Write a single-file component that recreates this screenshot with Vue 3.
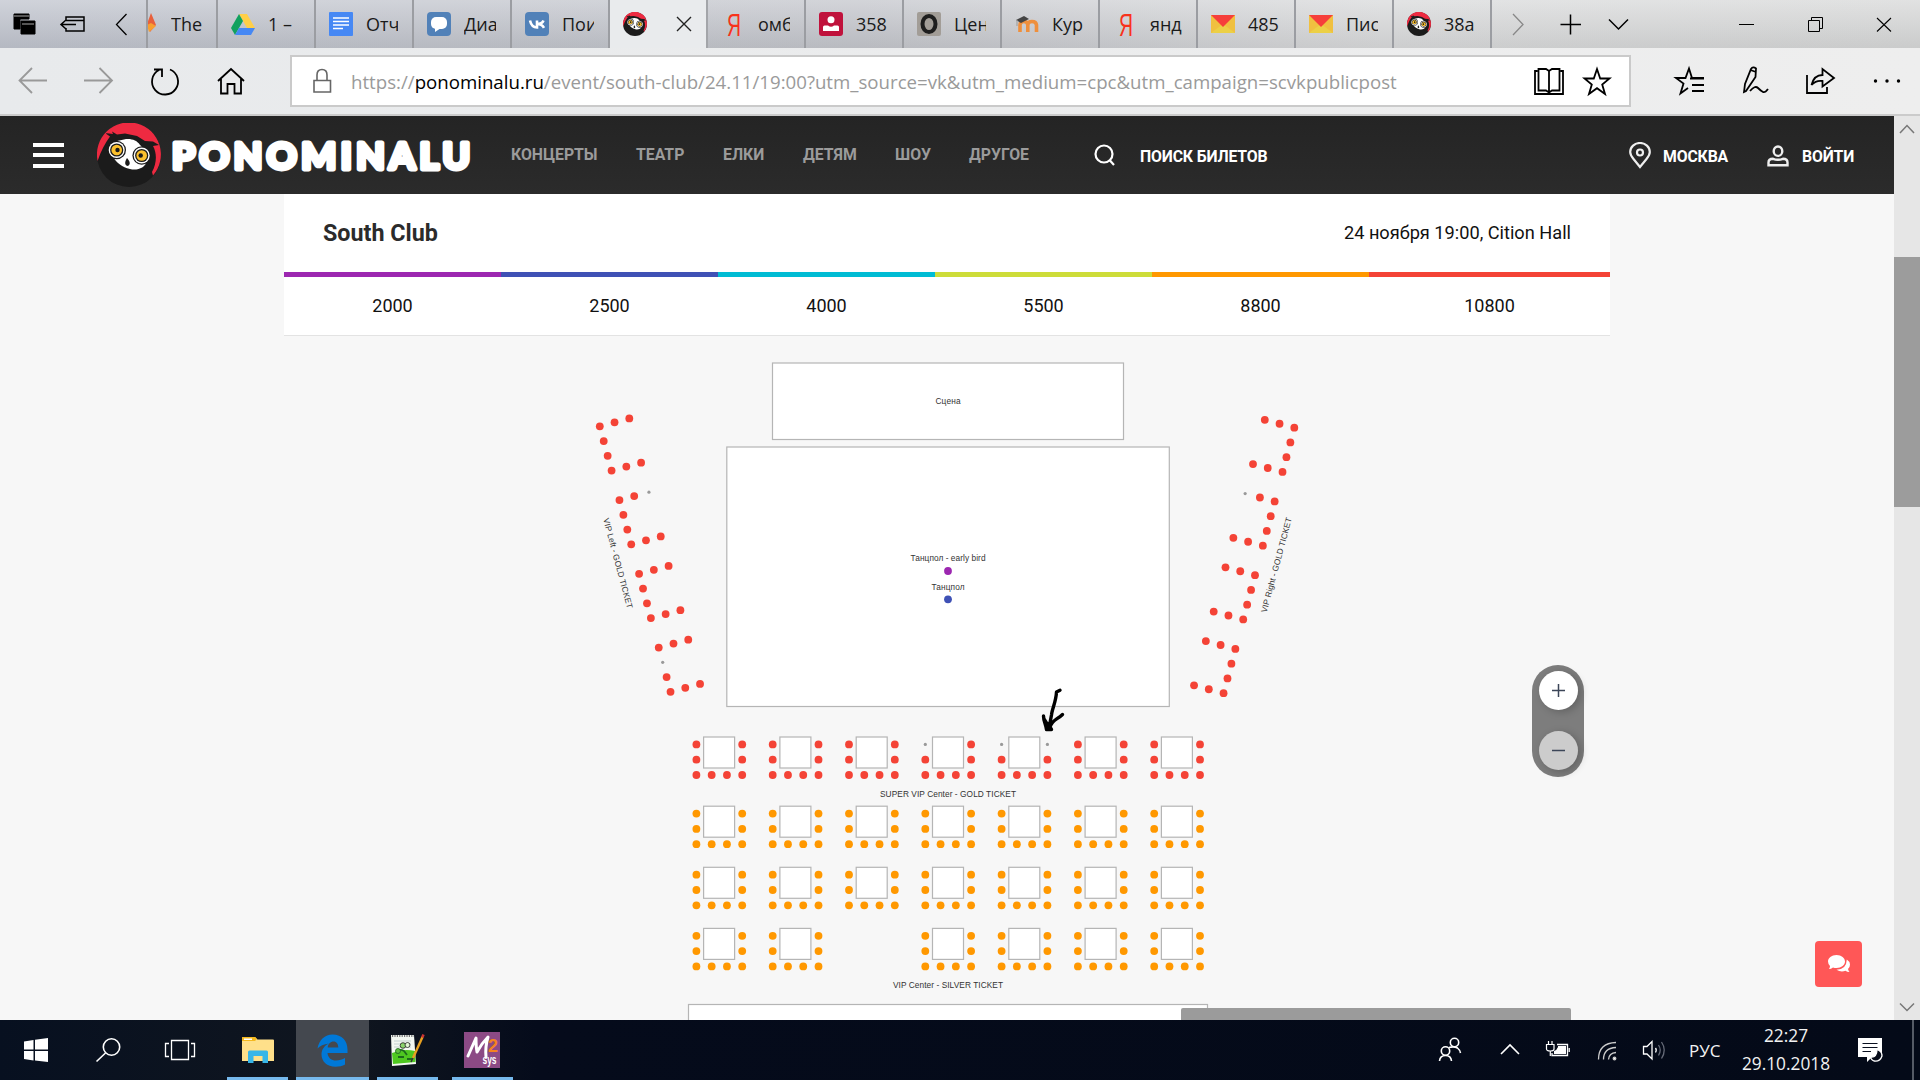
<script setup>
const tabs = [
  { icon: 'flame', text: 'The', narrow: true },
  { icon: 'drive', text: '1 –' },
  { icon: 'docs', text: 'Отч' },
  { icon: 'chat', text: 'Диа' },
  { icon: 'vk', text: 'Пои' },
  { icon: 'owl', text: '', active: true },
  { icon: 'ya', text: 'омб' },
  { icon: 'person', text: '358' },
  { icon: 'o', text: 'Цен' },
  { icon: 'moodle', text: 'Кур' },
  { icon: 'ya', text: 'янд' },
  { icon: 'mail', text: '485' },
  { icon: 'mail', text: 'Пис' },
  { icon: 'owl', text: '38a' },
]
const nav = [
  { t: 'КОНЦЕРТЫ', w: 125 },
  { t: 'ТЕАТР', w: 87 },
  { t: 'ЕЛКИ', w: 80 },
  { t: 'ДЕТЯМ', w: 92 },
  { t: 'ШОУ', w: 74 },
  { t: 'ДРУГОЕ', w: 125 },
]
const prices = [
  { p: 2000, c: 'purple' },
  { p: 2500, c: 'indigo' },
  { p: 4000, c: 'cyan' },
  { p: 5500, c: 'lime' },
  { p: 8800, c: 'orange' },
  { p: 10800, c: 'red' },
]

// Side VIP blocks: four tables in a slanted row, dir mirrors the block
function sideSeats(x0, y0, dir, sold) {
  const out = []
  const cells = [[0, 0], [1, 0], [2, 0], [0, 1], [0, 2], [0, 3], [1, 3], [2, 3]]
  for (let g = 0; g < 4; g++) {
    for (const [a, b] of cells) {
      const v = b + g * 5
      out.push({
        x: x0 + dir * (a * 14.75 + v * 3.93),
        y: y0 - dir * dir * a * 3.93 + v * 14.75,
        cls: sold.includes(`${g}-${a}-${b}`) ? 'sold' : 'gold',
      })
    }
  }
  return out
}

const tables = []
const seats = [
  ...sideSeats(599.8, 426.3, 1, ['1-2-0', '3-0-1']),
  ...sideSeats(1294.3, 427.7, -1, ['1-2-0']),
]
const rowY = [744.4, 813.6, 874.7, 935.8]
const centerSold = ['0-3-0', '0-4-0', '0-4-3']
rowY.forEach((y, r) => {
  for (let c = 0; c < 7; c++) {
    if (r === 3 && c === 2) continue
    const x = 696.4 + c * 76.3
    tables.push({ x: x + 7.2, y: y - 7.4 })
    for (const [a, b] of [[0, 0], [0, 1], [0, 2], [1, 2], [2, 2], [3, 2], [3, 1], [3, 0]]) {
      const sold = b === 0 && centerSold.includes(`${r}-${c}-${a}`)
      seats.push({
        x: x + a * 15.27,
        y: y + b * 15.3,
        cls: sold ? 'sold' : r === 0 ? 'gold' : 'silver',
      })
    }
  }
})
</script>

<template>
  <div class="screen">
    <svg class="defs" width="0" height="0">
      <symbol id="owl" viewBox="0 0 64 64">
        <circle cx="32" cy="32" r="32" fill="#1b1b1b" />
        <path d="M0.6 38A32 32 0 1 1 56 52.5L55 49C60 40 60 30 56 23L62 22 56 18.500 48 18 40 13 28 10.500 20 11.500 15 8.500 16 11 8 10 13 13.500C8 20 4 28 0.600 38Z" fill="#ee2a41" />
        <path d="M27 16.500C33 15 40 17 43 22L50 28 50 38C48 45 40 48 33 46 25 44 20 40 16 34L14 25 20 18Z" fill="#fff" />
        <circle cx="19.700" cy="27" r="9.300" fill="#1b1b1b" />
        <circle cx="44.700" cy="32.500" r="9.300" fill="#1b1b1b" />
        <circle cx="19.700" cy="27" r="8" fill="#fff" />
        <circle cx="44.700" cy="32.500" r="8" fill="#fff" />
        <circle cx="19.700" cy="27" r="6.600" fill="#1b1b1b" />
        <circle cx="44.700" cy="32.500" r="6.600" fill="#1b1b1b" />
        <circle cx="19.700" cy="27" r="5.300" fill="#fbc02d" />
        <circle cx="44.700" cy="32.500" r="5.300" fill="#fbc02d" />
        <circle cx="20.500" cy="27" r="2.200" fill="#1b1b1b" />
        <circle cx="43.700" cy="32.500" r="2.200" fill="#1b1b1b" />
        <path d="M30 35C33 38 34 42 30.500 43 27 42 28 38 30 35Z" fill="#1b1b1b" />
      </symbol>
    </svg>

    <div class="tabbar">
      <div class="tabtools">
        <svg width="147" height="48" fill="none" stroke="#000">
          <path d="M14 14H29V19H20V29H14Z" fill="#000" />
          <path d="M21 21H35V34H21Z" fill="#000" />
          <path d="M14 16H29M22 24H34" stroke="#aaa" />
          <path d="M66 21V17H84V31H66V28M66 20.500H84M61 24.500H76M66 20L61 24.500 66 29" stroke-width="1.500" />
          <path d="M126.500 14L116.500 24.500 126.500 35" stroke-width="1.300" />
        </svg>
      </div>
      <div v-for="(t, i) in tabs" :key="i" class="tab" :class="{ narrow: t.narrow, active: t.active }">
        <svg class="ticon" width="24" height="24" viewBox="0 0 24 24">
          <template v-if="t.icon === 'flame'">
            <path d="M13 12L17 1 22 13 16 20Z" fill="#e8603c" />
            <path d="M13 13L17 11 22 14 15 20Z" fill="#f9a030" />
          </template>
          <template v-else-if="t.icon === 'drive'">
            <path d="M8 2H16L24 16H16Z" fill="#ffcf48" />
            <path d="M8 2L12 9 4 23 0 16Z" fill="#11a15f" />
            <path d="M8 16H24L20 23H4Z" fill="#4688f4" />
          </template>
          <template v-else-if="t.icon === 'docs'">
            <rect width="24" height="24" rx="1" fill="#4688f4" />
            <path d="M4 6H20M4 9.500H20M4 13H20M4 16.500H14" stroke="#fff" stroke-width="1.700" />
          </template>
          <template v-else-if="t.icon === 'chat'">
            <rect width="24" height="24" rx="4" fill="#5181b8" />
            <rect x="4" y="5" width="16" height="12" rx="5" fill="#fff" />
            <path d="M8 15V20L14 16Z" fill="#fff" />
          </template>
          <template v-else-if="t.icon === 'vk'">
            <rect width="24" height="24" rx="4" fill="#5181b8" />
            <path d="M5 8.500C6 13 8 15.500 12 15.500V8.500M18.500 8.500C17.500 11 15 12 12 12 15 12 17.500 13 19 15.800" fill="none" stroke="#fff" stroke-width="2.600" />
          </template>
          <use v-else-if="t.icon === 'owl'" href="#owl" />
          <text v-else-if="t.icon === 'ya'" x="6" y="23.500" class="ya" textLength="14" lengthAdjust="spacingAndGlyphs">Я</text>
          <template v-else-if="t.icon === 'person'">
            <rect width="24" height="24" rx="3" fill="#c0123c" />
            <circle cx="12" cy="7.800" r="3.500" fill="#fff" />
            <path d="M4 19V15Q4 13.500 5.500 13.500H9Q12 16 15 13.500H18.500Q20 13.500 20 15V19Z" fill="#fff" />
          </template>
          <template v-else-if="t.icon === 'o'">
            <rect width="24" height="24" rx="2" fill="#a29d97" />
            <ellipse cx="12" cy="12" rx="6.500" ry="8" fill="none" stroke="#1e1e1e" stroke-width="4" />
          </template>
          <template v-else-if="t.icon === 'moodle'">
            <path d="M5 20V13Q5 9.500 8.800 9.500T12.800 13V20M12.800 13Q12.800 9.500 17 9.500T21.500 13V20" fill="none" stroke="#ef8f3c" stroke-width="3.600" />
            <path d="M1 8L9 4 14 7 6 11Z" fill="#444" />
            <path d="M2 8V14" stroke="#999" />
          </template>
          <template v-else-if="t.icon === 'mail'">
            <rect y="3" width="24" height="18" fill="#f0c040" />
            <path d="M0 21L12 12 24 21Z" fill="#ecd046" />
            <path d="M0 3H24L12 15Z" fill="#f63f3b" />
          </template>
        </svg>
        <svg v-if="t.active" class="tclose" width="16" height="16" stroke="#222" stroke-width="1.400"><path d="M1 1L15 15M15 1L1 15" /></svg>
        <span v-else class="ttext">{{ t.text }}</span>
      </div>
      <svg class="wintools" width="427" height="48" fill="none" stroke="#000" stroke-width="1.300">
        <path d="M21 14L31 24.500 21 35" stroke="#888" />
        <path d="M68.500 24.500H89M78.500 14.500V34.500" stroke-width="1.500" />
        <path d="M117 19.500L126.500 29 136 19.500" stroke-width="1.500" />
        <path d="M247 24.500H262" stroke-width="1" />
        <path d="M316.500 20.500H327.500V31.500H316.500ZM319.500 20V17.500H330.500V28.500H328" stroke-width="1" />
        <path d="M385 18L399 31.500M399 18L385 31.500" stroke-width="1.100" />
      </svg>
    </div>

    <div class="addressbar">
      <svg class="navicons" width="290" height="66" fill="none" stroke="#000" stroke-width="1.800">
        <g stroke="#999">
          <path d="M47 32.500H20M32 20L19.500 32.500 32 45" />
          <path d="M84 32.500H112M99.500 20L112 32.500 99.500 45" />
        </g>
        <path d="M170 21.500A13 13 0 1 1 159 22M154 21.500H162V29" />
        <path d="M218 33L231 21 244 33M221 31V45.500H227.500V36H234.500V45.500H241V31" />
      </svg>
      <div class="urlbox">
        <svg width="59" height="48" fill="none" stroke="#666" stroke-width="1.600">
          <path d="M22 23.500H38.500V35H22ZM25 23V18Q25 12.500 30 12.500T35 18V23" />
        </svg>
        <div class="url">https://<b>ponominalu.ru</b>/event/south-club/24.11/19:00?utm_source=vk&amp;utm_medium=cpc&amp;utm_campaign=scvkpublicpost</div>
        <svg width="107" height="48" fill="none" stroke="#000" stroke-width="1.800">
          <path d="M18.500 14H16V37H44V14H41.500M19.500 12H27L30 14 33 12H40.500V33.500H33L30 35.500 27 33.500H19.500ZM30 14V36" />
          <path d="M78 12L81.200 21.500H90.500L83.200 27.500 86 37 78 31.200 70 37 72.800 27.500 65.500 21.500H74.800Z" />
        </svg>
      </div>
      <svg class="acticons" width="289" height="66" fill="none" stroke="#000" stroke-width="1.800">
        <path d="M73 30H61L58 20.500 54.500 30H45L52.500 35.500 49.500 45.500 57 40M59 30.500H73M61 37H73M61 43H73" />
        <path d="M113 44L114 36 120 21Q122 18 125 20.500L124.500 29 115 43ZM119.500 22L125 24M119 43Q124 37 127 40T132 44 137 41" />
        <path d="M176 27V45H196V39M180.500 37Q183 27 191.500 27V21L203 30 191.500 38.500V33Q185 32 180.500 37Z" />
        <g fill="#000" stroke="none"><circle cx="244.500" cy="33" r="1.700" /><circle cx="256" cy="33" r="1.700" /><circle cx="267.500" cy="33" r="1.700" /></g>
      </svg>
    </div>

    <div class="viewport">
      <div class="page">
        <header class="site">
          <div class="burger"><i></i><i></i><i></i></div>
          <svg class="owl" width="64" height="64"><use href="#owl" /></svg>
          <svg class="brand" width="320" height="50"><text x="11" y="38.500" textLength="298">PONOMINALU</text></svg>
          <nav>
            <a v-for="n in nav" :key="n.t" :style="{ width: n.w + 'px' }">{{ n.t }}</a>
          </nav>
          <svg class="sicon" width="22" height="22" fill="none" stroke="#fff" stroke-width="2.200"><circle cx="10" cy="10" r="8.500" /><path d="M15.500 16L20 21" /></svg>
          <span class="find">ПОИСК БИЛЕТОВ</span>
          <svg class="pin" width="22" height="27" fill="none" stroke="#eee" stroke-width="2.200"><path d="M11 25L4.500 17Q1.200 13 1.200 10A9.800 9 0 0 1 20.800 10Q20.800 13 17.500 17Z" /><circle cx="11" cy="10.500" r="3" /></svg>
          <span class="city">МОСКВА</span>
          <svg class="user" width="22" height="22" fill="none" stroke="#eee" stroke-width="2.400"><ellipse cx="11" cy="6.200" rx="4.300" ry="4.700" /><path d="M1.500 20.300V17.500Q1.500 13.800 6 13.800 11 15.800 16 13.800 20.500 13.800 20.500 17.500V20.300Z" /></svg>
          <span class="login">ВОЙТИ</span>
        </header>

        <section class="event">
          <div class="title"><h1>South Club</h1><span>24 ноября 19:00, Cition Hall</span></div>
          <div class="prices">
            <div v-for="p in prices" :key="p.p" class="price" :class="p.c">{{ p.p }}</div>
          </div>
        </section>

        <div class="hall">
          <svg class="map" width="1894" height="684" viewBox="0 336 1894 684">
            <g class="box">
              <rect x="772.500" y="363" width="351" height="76.500" />
              <rect x="726.800" y="447" width="442.500" height="259.500" />
              <rect x="688.500" y="1004.500" width="519" height="40" />
              <rect v-for="(t, i) in tables" :key="i" :x="t.x" :y="t.y" width="31" height="31" />
            </g>
            <circle v-for="(s, i) in seats" :key="i" :cx="s.x" :cy="s.y" :r="s.cls === 'sold' ? 1.6 : 3.9" :class="s.cls" />
            <circle cx="948" cy="571" r="3.900" fill="#9c27b0" />
            <circle cx="948" cy="599.300" r="3.900" fill="#3f51b5" />
            <g class="lbl">
              <text x="948" y="404" textLength="25">Сцена</text>
              <text x="948" y="560.500" textLength="75">Танцпол - early bird</text>
              <text x="948" y="589.500" textLength="33">Танцпол</text>
              <text x="948" y="796.800" textLength="136">SUPER VIP Center - GOLD TICKET</text>
              <text x="948" y="987.800" textLength="110">VIP Center - SILVER TICKET</text>
              <text transform="translate(615.200 564) rotate(75)" textLength="93">VIP Left - GOLD TICKET</text>
              <text transform="translate(1279.200 565.700) rotate(-75)" textLength="98">VIP Right - GOLD TICKET</text>
            </g>
            <path class="ink" d="M1060 690.300L1056.500 692C1056 702 1052 709 1051.500 715L1049 728M1043.500 716C1043.500 721 1046 725 1046.500 729.500H1051.500L1048 724 1050 727C1053 719 1057 720 1062.500 714.500M1044 719L1049 727" />
          </svg>
          <div class="zoomer">
            <button><svg width="13" height="13"><path d="M0 6.500H13M6.500 0V13" /></svg></button>
            <button class="off"><svg width="13" height="13"><path d="M0 6.500H13" /></svg></button>
          </div>
          <div class="support">
            <svg width="24" height="20" viewBox="0 0 24 20" fill="#fff">
              <path d="M9.500 1C14.500 1 18 4 18 7.500S14.500 14 9.500 14Q7.500 14 6 13.400 4 15 2 15 3 13.500 3 12 1 10 1 7.500C1 4 4.500 1 9.500 1Z" />
              <path d="M19.800 5.500Q23 7.500 23 10.500T21 15Q21.500 17 22.500 18 20 18 18.500 16.700 14 18.500 9.500 15.700 19.500 15.500 19.800 5.500Z" />
            </svg>
          </div>
          <div class="hthumb"></div>
        </div>
      </div>
      <div class="vscroll">
        <svg width="26" height="26" fill="none" stroke="#777" stroke-width="1.500"><path d="M6 17L13 9.500 20 17" /></svg>
        <div class="vthumb"></div>
        <svg width="26" height="26" fill="none" stroke="#777" stroke-width="1.500"><path d="M6 9.500L13 16.500 20 9.500" /></svg>
      </div>
    </div>

    <div class="taskbar">
      <svg class="syst" width="227" height="60" fill="none" stroke="#fff" stroke-width="1.600">
        <path d="M24 21.500L33.500 20V29.500H24ZM35 19.800L48 18V29.500H35ZM24 31H33.500V40.500L24 39ZM35 31H48V42L35 40.500Z" fill="#fff" stroke="none" />
        <circle cx="111.500" cy="27" r="8.200" /><path d="M105.500 33L96.500 41.500" />
        <path d="M171.500 20.500H188.500V39.500H171.500ZM169 23.500H165.500V36.500H169M191 23.500H194.500V36.500H191" stroke-width="1.300" />
      </svg>
      <div class="app w61">
        <svg width="32" height="28" viewBox="0 0 32 28">
          <path d="M0 2Q0 1 1 1H13L15.500 3.500H31Q32 3.500 32 4.500V25H0Z" fill="#ffe08a" />
          <path d="M0 2Q0 1 1 1H13L15 3 13 5H0Z" fill="#f5b91f" /><rect x="2" y="2.500" width="8" height="1.500" fill="#fff" />
          <path d="M6 27V16Q6 14.500 7.500 14.500H24.500Q26 14.500 26 16V27H20.500V20H11.500V27Z" fill="#38b6e8" />
        </svg>
      </div>
      <div class="app edge w73">
        <svg width="31" height="33" viewBox="0 0 31 33">
          <path d="M0.500 14.500C2 6 8 0.500 15.500 0.500 25 0.500 30.500 7 30.500 15.500V19H10.500C11 24 14.500 26.500 19 26.500 22.500 26.500 25.500 25.500 28 24V30.500C25.500 32 22 32.700 18.500 32.700 10 32.700 4.500 27.500 4.500 20.500 4.500 15.500 7.500 11.500 12 9.500 6.500 10 3 12 0.500 14.500ZM10.700 13.500H21.300C21.300 10 19.500 7.500 16.500 7.500 13.500 7.500 11 10 10.700 13.500Z" fill="#0078d7" fill-rule="evenodd" />
        </svg>
      </div>
      <div class="app w61 gap8">
        <svg width="36" height="34" viewBox="0 0 36 34">
          <path d="M1 2L24 2 26 31 2 33Z" fill="#f4f8f2" />
          <path d="M2 20Q14 15 25 18L25.500 29 3 31Z" fill="#4ec820" />
          <path d="M2 3H24" stroke="#777" stroke-width="2" stroke-dasharray="1.200 1.200" />
          <path d="M4 8H21M4 11H21M4 14H21" stroke="#b9c6c8" stroke-width=".8" />
          <path d="M6 20Q9 15 14 18L17 22M8 24H14M17 26H22" stroke="#1c6a1c" stroke-width="1.800" fill="none" />
          <circle cx="13" cy="12.500" r="2.800" fill="#8bd36c" stroke="#222" stroke-width=".8" /><circle cx="17.500" cy="12" r="2.500" fill="#dff5d2" stroke="#222" stroke-width=".8" />
          <circle cx="8" cy="18" r="2.500" fill="#62c043" stroke="#1c6a1c" stroke-width=".8" />
          <path d="M32.500 4L23 25" stroke="#e8a020" stroke-width="2.400" /><path d="M33.500 1.500L32.300 4.500" stroke="#c33" stroke-width="2.600" /><path d="M23 25L21 29" stroke="#333" stroke-width="1.400" />
        </svg>
      </div>
      <div class="app w61 gap14">
        <svg width="36" height="36" viewBox="0 0 36 36">
          <rect width="36" height="36" fill="#8c4a85" />
          <path d="M4 24Q8 15 12 6 12 15 13 20 18 11 24 5 21 15 22 25" fill="none" stroke="#fff" stroke-width="3" stroke-linejoin="round" stroke-linecap="round" />
          <text x="24" y="20" class="m2n">2</text>
          <text x="18.500" y="32" class="m2s" textLength="14" lengthAdjust="spacingAndGlyphs">sys</text>
        </svg>
      </div>
      <svg class="tray" width="250" height="60" fill="none" stroke="#fff" stroke-width="1.600">
        <circle cx="24.500" cy="22.500" r="4.200" /><circle cx="15.500" cy="31" r="4.200" />
        <path d="M19 27.500Q24 26 27.500 28 30 30 30.500 33M9.500 41Q10 35.500 15.500 35.500T21.500 41" />
        <path d="M71 34L80 25 89 34" />
        <path d="M127 24.500H137.500V35.500H122V33" stroke-width="1.300" /><path d="M128 26H136V34H124V31Q127 30 128 27Z" fill="#fff" stroke="none" /><path d="M139.200 28V32" stroke-width="1.300" /><path d="M116.500 24.500H124V29Q124 31 120.300 31T116.500 29ZM118.500 21V25M122 21V25M120.300 31V36" stroke-width="1.200" />
        <g stroke="#ccc" stroke-width="1.300"><path d="M168.500 39.500Q168.500 23 186 22.500M173.500 39.500Q173.500 28 186 27.500M178.500 39.500Q179 33 186 32.500" /><circle cx="184.500" cy="38.500" r="1.300" fill="#fff" /></g>
        <path d="M213.500 26.500H217L222 21.500V39L217 34H213.500Z" stroke-width="1.300" /><path d="M225.500 28Q227 30 225.500 32.500" stroke-width="1.300" /><path d="M228.500 25Q232 30 228.500 35.500M231.500 22Q237 30 231.500 38.500" stroke="#666b78" stroke-width="1.300" />
      </svg>
      <span class="lang">РУС</span>
      <div class="clock"><span>22:27</span><span>29.10.2018</span></div>
      <svg class="note" width="40" height="60" fill="none">
        <path d="M8 18H32V37H22L17 42V37H8Z" fill="#fff" />
        <path d="M12.500 23.500H27.500M12.500 27.500H27.500M12.500 31.500H21" stroke="#0a1020" stroke-width="1.200" />
        <path d="M27 29.500Q32 31 32 36 30 42 24 41 21 40 20.500 37 27 38 27 29.500Z" fill="#050a18" stroke="#fff" stroke-width="1.300" />
      </svg>
      <div class="peek"></div>
    </div>
  </div>
</template>

<style>
body { margin: 0; overflow: hidden; }
</style>

<style scoped>
.screen { width: 1920px; height: 1080px; display: flex; flex-direction: column; overflow: hidden; font-family: Roboto, sans-serif; }
.defs { position: absolute; }
svg { display: block; flex: none; }

.tabbar { height: 48px; flex: none; display: flex; background: linear-gradient(180deg, rgba(255,255,255,.25), rgba(0,0,0,.06)), linear-gradient(90deg, #c0c4ce 0, #c4c6cc 45%, #d9dadb 72%, #d7d8d8 100%); font-family: "Open Sans", "Noto Sans", sans-serif; }
.tabtools { width: 148px; box-shadow: inset -2px 0 #9b9da2; }
.tab { width: 98px; box-sizing: border-box; border-right: 2px solid #9b9da2; display: flex; align-items: center; overflow: hidden; flex: none; }
.tab.narrow { width: 70px; }
.tab.active { background: #e9ebed; border-right-color: #a3a5a9; }
.ticon { margin-left: 13px; }
.tab.narrow .ticon { margin-left: -14px; }
.ttext { margin-left: 13px; width: 32px; overflow: hidden; white-space: nowrap; font-size: 18px; line-height: 30px; color: #1a1a1a; }
.tclose { margin-left: 29px; }
.ya { font: 32px "Liberation Sans", sans-serif; fill: #f8321b; }

.addressbar { height: 68px; box-sizing: border-box; flex: none; display: flex; align-items: flex-start; background: linear-gradient(90deg, #e8eaec, #eeeeee); border-bottom: 2px solid #cbcbcb; }
.urlbox { margin-top: 7px; width: 1341px; height: 52px; box-sizing: border-box; border: 2px solid #cacaca; background: #fff; display: flex; }
.url { width: 1168px; white-space: nowrap; font: 18.670px/49px "Open Sans", "Noto Sans", sans-serif; color: #9a9a9a; }
.url b { font-weight: 400; color: #000; }

.viewport { flex: 1; display: flex; min-height: 0; }
.page { width: 1894px; display: flex; flex-direction: column; background: #f7f7f7; }
.site { height: 78px; flex: none; background: linear-gradient(#242424, #2b2b2b); display: flex; align-items: center; color: #fff; font-weight: 700; font-size: 15.800px; white-space: nowrap; }
.burger { width: 31px; height: 25px; margin-left: 33px; display: flex; flex-direction: column; justify-content: space-between; }
.burger i { height: 4px; background: #fff; }
.owl { margin-left: 33px; }
.brand { margin-right: 30px; }
.brand text { font: 700 37px Lato, sans-serif; fill: #fff; stroke: #fff; stroke-width: 5px; stroke-linejoin: round; }
nav { display: flex; color: #9b9b9b; }
nav a { margin-top: -1px; }
.find { margin-left: 24px; width: 489px; letter-spacing: -0.150px; padding-top: 2px; }
.city { margin-left: 12px; width: 104px; letter-spacing: -0.150px; padding-top: 2px; }
.user { margin-top: 2px; }
.login { margin-left: 13px; letter-spacing: -0.150px; padding-top: 2px; }

.event { width: 1326px; margin-left: 284px; flex: none; background: #fff; border-bottom: 1px solid #e3e3e3; box-sizing: border-box; height: 142px; }
.title { height: 78px; padding: 0 39px 1px; display: flex; justify-content: space-between; align-items: center; box-sizing: border-box; font-size: 18.200px; color: #111; }
.title h1 { margin: 0; font-size: 23.300px; font-weight: 700; color: #2b2b2b; }
.prices { display: flex; }
.price { width: 217px; box-sizing: border-box; border-top: 5px solid; height: 62px; line-height: 57px; text-align: center; font-size: 18px; color: #111; }
.price.red { width: 241px; }
.purple { border-color: #9c27b0; }
.indigo { border-color: #3f51b5; }
.cyan { border-color: #00bcd4; }
.lime { border-color: #cddc39; }
.orange { border-color: #ff9800; }
.red { border-color: #f44336; }

.hall { flex: 1; position: relative; overflow: hidden; }
.box rect { fill: #fff; stroke: #b5b5b5; stroke-width: 1.200; }
.gold { fill: #f44336; }
.silver { fill: #ff9800; }
.sold { fill: #999; }
.lbl text { font: 8.300px "Liberation Sans", sans-serif; fill: #333; text-anchor: middle; }
.ink { fill: none; stroke: #000; stroke-width: 3.400; stroke-linecap: round; stroke-linejoin: round; }
.zoomer { position: absolute; left: 1532px; top: 329px; width: 52px; height: 112px; box-sizing: border-box; padding: 6px 6px 7px 7px; border-radius: 26px; background: #7d7d7d; display: flex; flex-direction: column; justify-content: space-between; }
.zoomer button { width: 39px; height: 39px; padding: 0 1px 0 0; border: 0; border-radius: 50%; background: #fff; display: flex; align-items: center; justify-content: center; box-shadow: 3px 2px 8px rgba(0,0,0,.22); }
.zoomer button.off { background: #ccc; }
.zoomer path { stroke: #3c4658; stroke-width: 1.500; }
.support { position: absolute; left: 1815px; top: 605px; width: 47px; height: 46px; border-radius: 4px; background: #ff5757; display: flex; align-items: center; justify-content: center; }
.hthumb { position: absolute; left: 1181px; top: 672px; width: 390px; height: 12px; background: #9b9b9b; border-radius: 2px 2px 0 0; }

.vscroll { width: 26px; background: #e6e6e6; display: flex; flex-direction: column; }
.vthumb { height: 250px; margin: 115px 0 auto; background: #9c9c9c; }

.taskbar { height: 60px; flex: none; display: flex; background: linear-gradient(90deg, #071020 0, #10161f 18%, #050b1b 28%, #040a18 100%); color: #f2f2f2; font-family: "Open Sans", "Noto Sans", sans-serif; }
.app { height: 60px; box-sizing: border-box; border-bottom: 3px solid #76b9ed; display: flex; align-items: center; justify-content: center; padding-top: 3px; }
.w61 { width: 61px; }
.w73 { width: 73px; margin-left: 8px; }
.gap8 { margin-left: 8px; }
.gap14 { margin-left: 14px; padding-right: 2px; box-sizing: border-box; }
.edge { background: #44484f; }
.m2n { font: 700 18px "Liberation Sans", sans-serif; fill: #f58220; }
.m2s { font: 700 12px "Liberation Sans", sans-serif; fill: #fff; }
.tray { margin-left: 917px; }
.lang { width: 49px; margin-left: 9px; font-size: 17px; line-height: 61px; }
.clock { width: 96px; display: flex; flex-direction: column; align-items: center; font-size: 17.300px; line-height: 28px; padding-top: 2px; }
.note { margin-left: 16px; }
.peek { width: 1px; margin-left: 22px; background: #555b66; border-right: 1px solid #555b66; }
</style>
